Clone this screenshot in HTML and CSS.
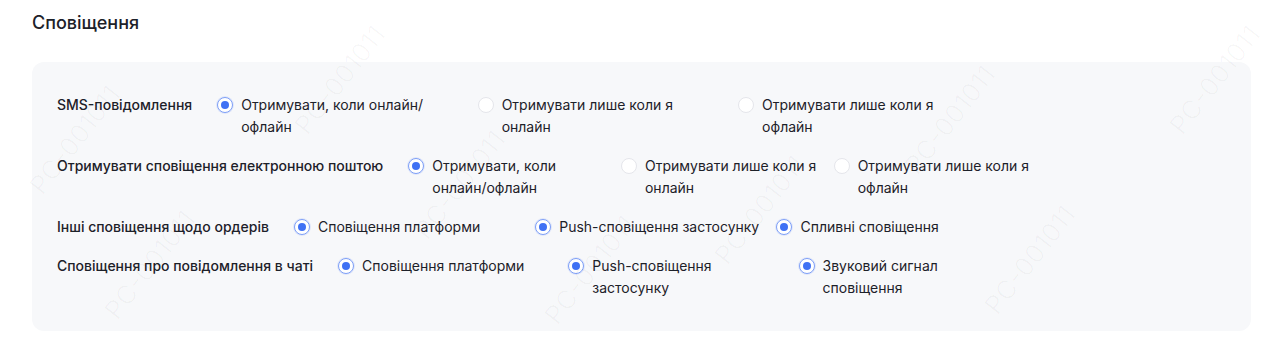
FILE: index.html
```html
<!DOCTYPE html>
<html lang="uk">
<head>
<meta charset="utf-8">
<title>Сповіщення</title>
<link rel="stylesheet" href="styles.css">
</head>
<body>
<div class="page">
  <h2 class="title">Сповіщення</h2>
  <div class="card">
    <div class="row">
      <div class="label">SMS-повідомлення</div>
      <div class="group">
        <label class="opt"><span class="radio on"></span><span class="txt">Отримувати, коли онлайн/офлайн</span></label>
        <label class="opt"><span class="radio"></span><span class="txt">Отримувати лише коли я онлайн</span></label>
        <label class="opt"><span class="radio"></span><span class="txt">Отримувати лише коли я офлайн</span></label>
      </div>
    </div>
    <div class="row">
      <div class="label">Отримувати сповіщення електронною поштою</div>
      <div class="group">
        <label class="opt"><span class="radio on"></span><span class="txt">Отримувати, коли онлайн/офлайн</span></label>
        <label class="opt"><span class="radio"></span><span class="txt">Отримувати лише коли я онлайн</span></label>
        <label class="opt"><span class="radio"></span><span class="txt">Отримувати лише коли я офлайн</span></label>
      </div>
    </div>
    <div class="row">
      <div class="label">Інші сповіщення щодо ордерів</div>
      <div class="group">
        <label class="opt"><span class="radio on"></span><span class="txt">Сповіщення платформи</span></label>
        <label class="opt"><span class="radio on"></span><span class="txt">Push-сповіщення застосунку</span></label>
        <label class="opt"><span class="radio on"></span><span class="txt">Спливні сповіщення</span></label>
      </div>
    </div>
    <div class="row">
      <div class="label">Сповіщення про повідомлення в чаті</div>
      <div class="group">
        <label class="opt"><span class="radio on"></span><span class="txt">Сповіщення платформи</span></label>
        <label class="opt"><span class="radio on"></span><span class="txt">Push-сповіщення застосунку</span></label>
        <label class="opt"><span class="radio on"></span><span class="txt">Звуковий сигнал сповіщення</span></label>
      </div>
    </div>
  </div>
</div>
<div class="wm" aria-hidden="true">
  <span class="mark m1">PC-001011</span>
  <span class="mark m2">PC-001011</span>
  <span class="mark m3">PC-001011</span>
  <span class="mark m4">PC-001011</span>
  <span class="mark m5">PC-001011</span>
  <span class="mark m6">PC-001011</span>
  <span class="mark m7">PC-001011</span>
  <span class="mark m8">PC-001011</span>
  <span class="mark m9">PC-001011</span>
</div>
</body>
</html>
```
FILE: styles.css
```css
html, body {
  margin: 0;
  padding: 0;
  background: #ffffff;
}
body {
  font-family: Inter, "Noto Sans", "Liberation Sans", sans-serif;
  color: #1d2129;
  font-size: 14px;
  line-height: 22px;
}
.page {
  padding: 10px 29px 0 32px;
}
.title {
  margin: 0;
  font-size: 18px;
  line-height: 26px;
  font-weight: 500;
  color: #1d2129;
}
.card {
  margin-top: 26px;
  background: #f7f8fa;
  border-radius: 12px;
  padding: 32px 24px 32px 25px;
  display: flex;
  flex-direction: column;
  gap: 17px;
}
.row {
  display: flex;
  align-items: flex-start;
}
.label {
  font-weight: 500;
  padding-right: 25px;
  white-space: nowrap;
}
.group {
  flex: 1;
  display: flex;
  align-items: flex-start;
}
.opt {
  width: 25%;
  margin-right: 8px;
  display: flex;
  align-items: flex-start;
  flex-shrink: 0;
}
.radio {
  width: 16px;
  height: 16px;
  box-sizing: border-box;
  border-radius: 50%;
  border: 1px solid #e5e6eb;
  background: #fff;
  margin-top: 3px;
  flex-shrink: 0;
  display: flex;
  align-items: center;
  justify-content: center;
}
.radio.on {
  border-color: #7e9ff7;
  box-shadow: 0 0 0 1px rgba(64, 114, 245, 0.12);
}
.radio.on::after {
  content: "";
  width: 8px;
  height: 8px;
  border-radius: 50%;
  background: #3f71f4;
}
.txt {
  padding: 0 8px;
  min-width: 0;
}
.wm {
  position: absolute;
  inset: 0;
  overflow: hidden;
  pointer-events: none;
}
.mark {
  position: absolute;
  font-size: 26px;
  line-height: 30px;
  color: rgba(0, 0, 0, 0.028);
  transform: translate(-50%, -50%) rotate(-52deg);
  white-space: nowrap;
  font-family: Inter, sans-serif;
}
.m1 { left: 75px; top: 140px; }
.m2 { left: 340px; top: 80px; }
.m3 { left: 460px; top: 185px; }
.m4 { left: 150px; top: 265px; }
.m5 { left: 590px; top: 270px; }
.m6 { left: 950px; top: 120px; }
.m7 { left: 1215px; top: 80px; }
.m8 { left: 1030px; top: 260px; }
.m9 { left: 760px; top: 210px; }
```
